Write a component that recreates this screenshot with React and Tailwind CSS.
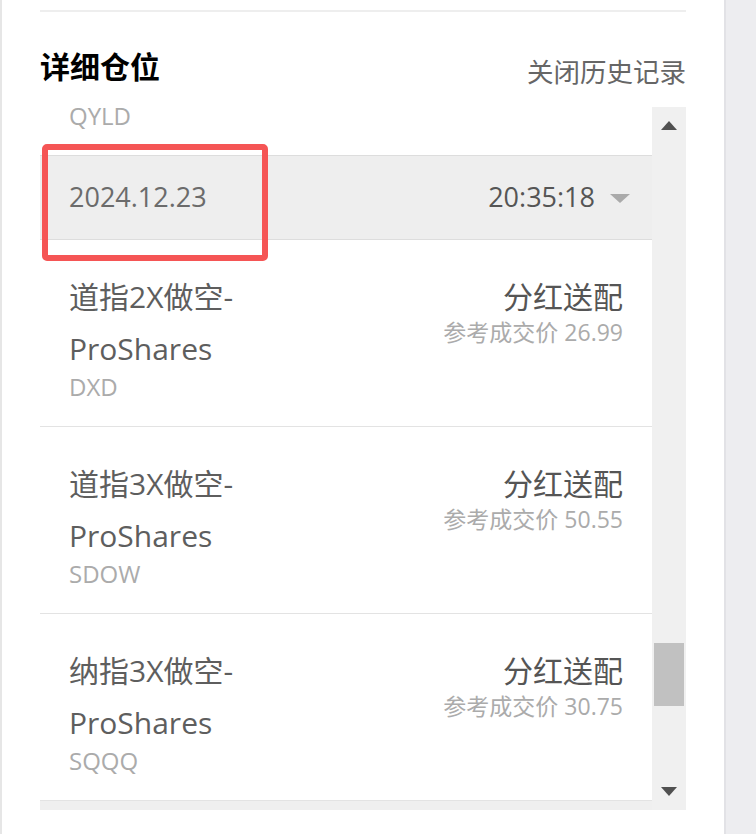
import React from "react";

const font = "font-['Open_Sans','Noto_Sans_CJK_SC',sans-serif]";

const rows = [
  { name: "道指2X做空-ProShares", code: "DXD", price: "26.99" },
  { name: "道指3X做空-ProShares", code: "SDOW", price: "50.55" },
  { name: "纳指3X做空-ProShares", code: "SQQQ", price: "30.75" },
];

const HoldingRow = ({ name, code, price }) => (
  <div className="h-[187px] shrink-0 border-b border-[#e3e3e3] flex justify-between pl-[29px] pr-[29px] pt-[31px]">
    <div className="flex flex-col">
      <div className="max-w-[260px] text-[30px] leading-[52px] text-[#5e5e5e]">
        {name}
      </div>
      <div className="text-[24px] leading-[24px] text-[#ababab]">{code}</div>
    </div>
    <div className="flex flex-col items-end">
      <div className="text-[30px] leading-[52px] text-[#555555]">分红送配</div>
      <div className="-mt-[3px] text-[23px] leading-[24px] text-[#ababab]">
        参考成交价 {price}
      </div>
    </div>
  </div>
);

export default function App() {
  return (
    <div className={`relative flex w-[756px] h-[834px] bg-white ${font}`}>
      <div className="w-[724px] h-full border-l-[2px] border-[#e6e6e6] pl-[38px] pr-[38px] flex flex-col">
        <div className="mt-[10px] h-[2px] bg-[#eeeeee]" />

        <div className="mt-[35px] flex items-end justify-between">
          <div className="text-[30px] leading-[40px] font-bold text-black">
            详细仓位
          </div>
          <div className="text-[26.5px] leading-[30px] text-[#666666]">
            关闭历史记录
          </div>
        </div>

        <div className="mt-[20px] h-[703px] flex bg-[#efefef]">
          <div className="w-[612px] flex flex-col">
            <div className="h-[48px] shrink-0 bg-white pl-[29px]">
              <div className="-mt-[3px] text-[24px] leading-[24px] text-[#ababab]">
                QYLD
              </div>
            </div>

            <div className="h-[85px] shrink-0 border-y border-[#dddddd] bg-[#eeeeee] flex items-center justify-between pl-[29px] pr-[22px]">
              <span className="text-[27px] text-[#6b6b6b]">2024.12.23</span>
              <div className="flex items-center gap-[15px]">
                <span className="text-[27px] text-[#555555]">20:35:18</span>
                <span className="w-0 h-0 border-l-[10px] border-r-[10px] border-t-[9px] border-l-transparent border-r-transparent border-t-[#aaaaaa] mt-[2px]" />
              </div>
            </div>

            <div className="flex flex-col bg-white">
              {rows.map((r) => (
                <HoldingRow key={r.code} {...r} />
              ))}
            </div>
          </div>

          <div className="w-[34px] flex flex-col items-center pt-[14px] pb-[14px] bg-[#f0f0f0]">
            <span className="w-0 h-0 border-l-[8px] border-r-[8px] border-b-[9px] border-l-transparent border-r-transparent border-b-[#505050]" />
            <div className="mt-[513px] w-[30px] h-[63px] bg-[#c1c1c1]" />
            <div className="flex-1" />
            <span className="w-0 h-0 border-l-[8px] border-r-[8px] border-t-[9px] border-l-transparent border-r-transparent border-t-[#505050]" />
          </div>
        </div>
      </div>

      <div className="flex-1 h-full border-l-[2px] border-[#e2e2e6] bg-[#ededf0]" />

      <div className="absolute left-[42px] top-[144px] w-[226px] h-[117px] border-[6px] border-[#f55555] rounded-[5px]" />
    </div>
  );
}
